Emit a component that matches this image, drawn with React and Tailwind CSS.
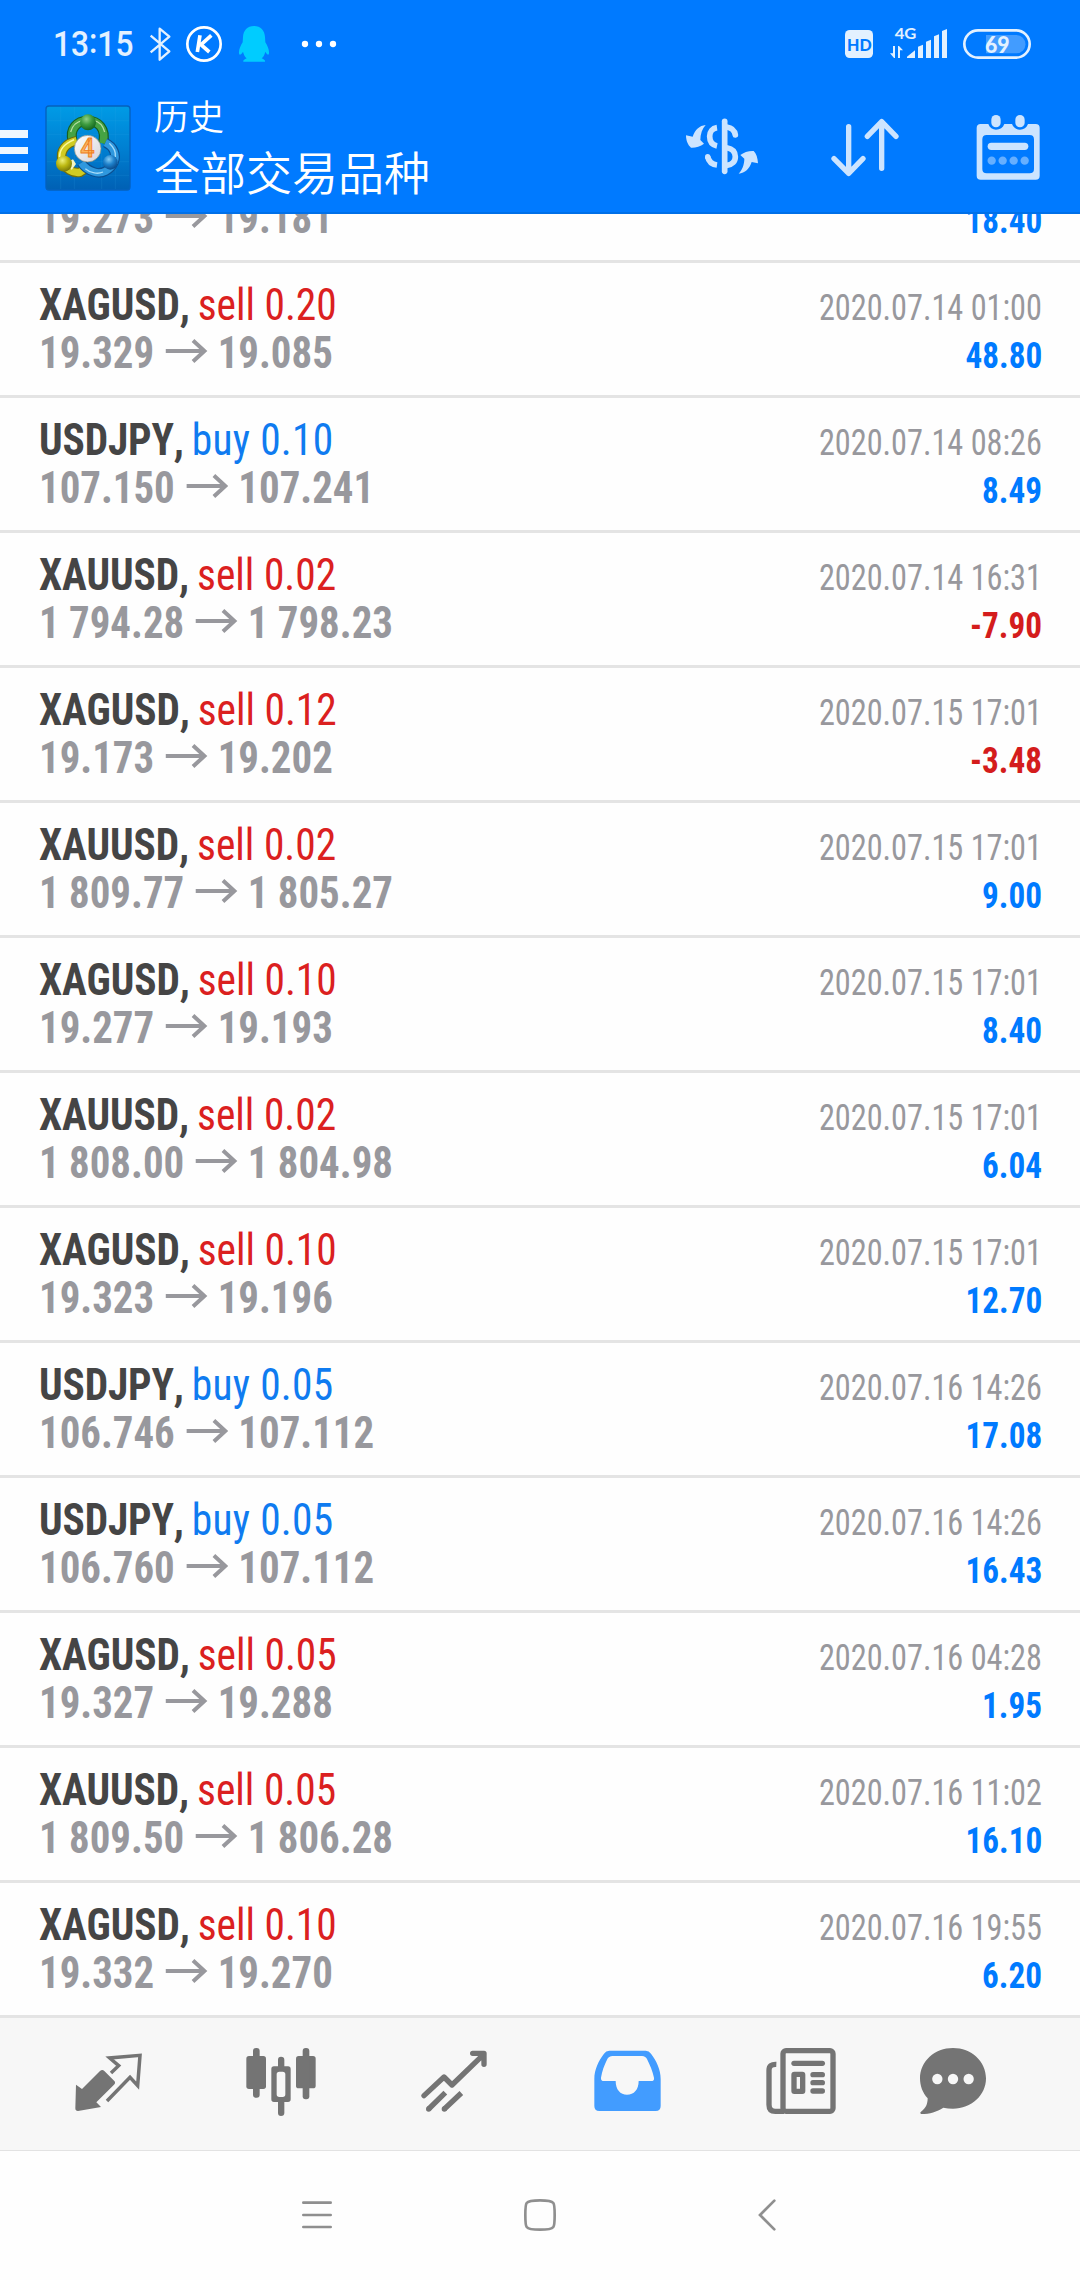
import React from "react";

const trades = [
  ["XAGUSD", "sell", "0.20", "19.329", "19.085", "2020.07.14 01:00", "48.80"],
  ["USDJPY", "buy", "0.10", "107.150", "107.241", "2020.07.14 08:26", "8.49"],
  ["XAUUSD", "sell", "0.02", "1 794.28", "1 798.23", "2020.07.14 16:31", "-7.90"],
  ["XAGUSD", "sell", "0.12", "19.173", "19.202", "2020.07.15 17:01", "-3.48"],
  ["XAUUSD", "sell", "0.02", "1 809.77", "1 805.27", "2020.07.15 17:01", "9.00"],
  ["XAGUSD", "sell", "0.10", "19.277", "19.193", "2020.07.15 17:01", "8.40"],
  ["XAUUSD", "sell", "0.02", "1 808.00", "1 804.98", "2020.07.15 17:01", "6.04"],
  ["XAGUSD", "sell", "0.10", "19.323", "19.196", "2020.07.15 17:01", "12.70"],
  ["USDJPY", "buy", "0.05", "106.746", "107.112", "2020.07.16 14:26", "17.08"],
  ["USDJPY", "buy", "0.05", "106.760", "107.112", "2020.07.16 14:26", "16.43"],
  ["XAGUSD", "sell", "0.05", "19.327", "19.288", "2020.07.16 04:28", "1.95"],
  ["XAUUSD", "sell", "0.05", "1 809.50", "1 806.28", "2020.07.16 11:02", "16.10"],
  ["XAGUSD", "sell", "0.10", "19.332", "19.270", "2020.07.16 19:55", "6.20"],
];

function StatusBar() {
  return (
    <div className="flex h-[88px] shrink-0 text-[#e3f1ff]">
      <div className="ml-[52.5px] w-[96.5px] origin-left scale-x-[0.905] whitespace-nowrap pt-[24px] font-['Roboto'] text-[35px] font-medium leading-[42px]">
        13<span className="relative top-[-3px]">:</span>15
      </div>
      <svg className="h-[88px] w-[23px]" viewBox="447 0 69 264" fill="none" stroke="currentColor" strokeWidth="7">
        <path d="M452 107L508 154L479 179V86L508 110L452 157" strokeLinejoin="round" />
      </svg>
      <svg className="ml-[13px] h-[88px] w-[38px]" viewBox="555 0 114 264" fill="none">
        <circle cx="612" cy="132" r="50" stroke="#fff" strokeWidth="8" />
        <path d="M600 106L592 156M634 106L603 134L628 156" stroke="#fff" strokeWidth="11" />
      </svg>
      <svg className="ml-[15px] h-[88px] w-[32px]" viewBox="714 0 96 264">
        <path
          d="M762 78C742 78 730 92 729 111L728 127C721 138 716 150 717 160C718 168 724 163 729 155C731 164 735 171 740 175C733 178 729 181 730 185H795C796 181 792 178 785 175C790 171 794 164 796 155C801 163 806 168 807 160C808 150 803 138 796 127L795 111C794 92 782 78 762 78Z"
          fill="#00ccff"
        />
      </svg>
      <svg className="ml-[30px] h-[88px] w-[38px]" viewBox="900 0 114 264" fill="#fff">
        <circle cx="915" cy="132" r="9.5" />
        <circle cx="957" cy="132" r="9.5" />
        <circle cx="999" cy="132" r="9.5" />
      </svg>
      <svg className="ml-auto h-[88px] w-[30px]" viewBox="552 0 90 264">
        <rect x="555" y="90" width="84" height="84" rx="14" fill="currentColor" />
        <text x="561" y="152" textLength="74" lengthAdjust="spacingAndGlyphs" fontFamily="Lato" fontWeight="900" fontSize="53" fill="#007aff">
          HD
        </text>
      </svg>
      <svg className="ml-[15px] h-[88px] w-[60px]" viewBox="687 0 180 264" fill="currentColor">
        <text x="704" y="117" textLength="65" lengthAdjust="spacingAndGlyphs" fontFamily="Lato" fontWeight="700" fontSize="48">
          4G
        </text>
        <path d="M699 138H705V174H702L690 160H699ZM714 174V138H717L729 151H720V174Z" />
        <path d="M741 174V170L765 151V174ZM774 174V140L789 134V174ZM798 174V125L813 119V174ZM822 174V109L837 103V174ZM846 174V93L861 87V174Z" />
      </svg>
      <svg className="ml-[13px] mr-[48px] h-[88px] w-[70px]" viewBox="906 0 210 264">
        <path d="M978 105H1069A27 27 0 0 1 1069 160H978Z" fill="#429cff" />
        <rect x="913" y="91" width="196" height="82" rx="41" fill="none" stroke="currentColor" strokeWidth="8" />
        <text x="975" y="158" textLength="74" lengthAdjust="spacingAndGlyphs" fontFamily="Lato" fontWeight="900" fontSize="70" fill="currentColor">
          69
        </text>
      </svg>
    </div>
  );
}

function Logo() {
  return (
    <svg className="ml-[17px] h-[124px] w-[86px]" viewBox="135 264 258 372">
      <defs>
        <linearGradient id="tile" x1="0" y1="0" x2="0" y2="1">
          <stop offset="0" stopColor="#009be6" />
          <stop offset="0.5" stopColor="#0080d2" />
          <stop offset="1" stopColor="#0060b4" />
        </linearGradient>
        <radialGradient id="green" cx="0.4" cy="0.3" r="0.7">
          <stop offset="0" stopColor="#8fd08a" />
          <stop offset="0.5" stopColor="#3d9b3f" />
          <stop offset="1" stopColor="#14661f" />
        </radialGradient>
        <radialGradient id="yellow" cx="0.4" cy="0.3" r="0.7">
          <stop offset="0" stopColor="#eef07a" />
          <stop offset="0.5" stopColor="#bdb912" />
          <stop offset="1" stopColor="#7b7a08" />
        </radialGradient>
        <radialGradient id="blue" cx="0.4" cy="0.3" r="0.7">
          <stop offset="0" stopColor="#84ccf5" />
          <stop offset="0.5" stopColor="#1f82cc" />
          <stop offset="1" stopColor="#0a4b8c" />
        </radialGradient>
        <linearGradient id="disc" x1="0" y1="0" x2="1" y2="1">
          <stop offset="0" stopColor="#ffffff" />
          <stop offset="1" stopColor="#d4d4da" />
        </linearGradient>
      </defs>
      <rect x="138" y="318" width="252" height="252" rx="9" fill="url(#tile)" stroke="#0461bd" strokeWidth="4" />
      <path d="M182 321V567M223 321V567M305 321V567M346 321V567M141 362H387M141 403H387M141 485H387M141 526H387" stroke="#38aee8" strokeOpacity="0.22" strokeWidth="2" />
      <path d="M218 424C207 386 232 362 263 362C294 362 320 386 309 430" fill="none" stroke="#17601f" strokeWidth="30" />
      <path d="M218 424C207 386 232 362 263 362C294 362 320 386 309 430" fill="none" stroke="#45a343" strokeWidth="23" />
      <path d="M212 396C217 376 233 364 248 361M314 396C309 376 295 364 280 361" fill="none" stroke="#b2dda2" strokeWidth="4" />
      <path d="M230 422C196 430 178 453 187 482C197 508 218 520 240 517L256 506" fill="none" stroke="#6f6e0c" strokeWidth="29" />
      <path d="M230 422C196 430 178 453 187 482C197 508 218 520 240 517L256 506" fill="none" stroke="#d0cb22" strokeWidth="22" />
      <path d="M222 419C190 432 178 453 179 471" fill="none" stroke="#fbf99e" strokeWidth="5" />
      <path d="M316 428C341 440 351 464 342 487C331 511 306 524 282 516C266 511 253 502 244 488" fill="none" stroke="#0b4f91" strokeWidth="29" />
      <path d="M316 428C341 440 351 464 342 487C331 511 306 524 282 516C266 511 253 502 244 488" fill="none" stroke="#2f98de" strokeWidth="22" />
      <path d="M328 430C342 443 348 457 346 471M256 506C272 520 294 523 309 516" fill="none" stroke="#a6dcf9" strokeWidth="4" />
      <path d="M219 478L228 492L215 510L202 486Z" fill="#f4f5c3" />
      <circle cx="264" cy="367" r="24" fill="url(#green)" />
      <circle cx="192" cy="491" r="24" fill="url(#yellow)" />
      <circle cx="331" cy="487" r="22" fill="url(#blue)" />
      <circle cx="263" cy="446" r="40" fill="url(#disc)" stroke="#8a8c7a" strokeWidth="2" />
      <text x="241" y="472" textLength="43" lengthAdjust="spacingAndGlyphs" fontFamily="Roboto" fontWeight="600" fontSize="75" fill="#fbb45c" stroke="#ee7d1e" strokeWidth="2.5">
        4
      </text>
    </svg>
  );
}

function Toolbar() {
  return (
    <div className="flex h-[124px] shrink-0">
      <div className="flex w-[28px] flex-col gap-[9px] pt-[42px]">
        <div className="h-[7.5px] bg-[#eff7ff]" />
        <div className="h-[7.5px] bg-[#eff7ff]" />
        <div className="h-[7.5px] bg-[#eff7ff]" />
      </div>
      <Logo />
      <div className="ml-[23px] flex flex-col whitespace-nowrap font-['Noto_Sans_CJK_SC',sans-serif] font-[350] text-white">
        <div className="mt-[6px] text-[35px] leading-[42px]">历史</div>
        <div className="mt-[6px] text-[46px] leading-[56px]">全部交易品种</div>
      </div>
      <svg className="ml-auto h-[124px] w-[80px]" viewBox="66 264 240 372" fill="#cce4ff">
        <path d="M137 375C118 377 105 389 98 410L78 406C78 422 84 436 93 443C105 444 121 439 132 431L121 420C121 402 127 386 137 375Z" />
        <path d="M236 521C255 519 268 507 275 486L294 490C293 474 289 460 281 453C267 452 251 457 241 465L253 476C253 494 246 510 236 521Z" />
        <g fill="none" stroke="#cce4ff">
          <path d="M194 364V514" strokeWidth="17" strokeLinecap="round" />
          <path d="M171 383C157 385 149 395 149 409C149 424 157 435 171 438" strokeWidth="17" />
          <path d="M143 470C146 485 156 493 171 495" strokeWidth="17" />
          <path d="M143 470V471" strokeWidth="16" strokeLinecap="round" />
          <path d="M200 381C215 383 224 392 226 405" strokeWidth="17" strokeLinecap="round" />
          <path d="M200 443C217 446 226 456 226 470C226 484 217 494 200 496" strokeWidth="17" />
        </g>
      </svg>
      <svg className="ml-[66px] h-[124px] w-[74px]" viewBox="504 264 222 372" fill="none" stroke="#cce4ff" strokeWidth="16" strokeLinecap="round" strokeLinejoin="round">
        <path d="M566 380V520M522 476L566 520L609 476M665 505V365M622 409L665 365L708 409" />
      </svg>
      <svg className="ml-[72px] mr-[38px] h-[124px] w-[68px]" viewBox="942 264 204 372">
        <path
          fillRule="evenodd"
          fill="#cce4ff"
          d="M962 372H985C989 383 998 389 1008 389C1020 389 1029 383 1033 372H1056C1060 383 1069 389 1080 389C1091 389 1100 383 1104 372H1127Q1139 372 1139 384V527Q1139 539 1127 539H962Q950 539 950 527V384Q950 372 962 372ZM980 405Q967 405 967 418V507Q967 520 980 520H1109Q1122 520 1122 507V418Q1122 405 1109 405Z"
        />
        <rect x="994" y="345" width="28" height="37" rx="14" fill="#cce4ff" />
        <rect x="1066" y="345" width="28" height="37" rx="14" fill="#cce4ff" />
        <rect x="983" y="428" width="122" height="22" rx="11" fill="#cce4ff" />
        <g fill="#66afff">
          <circle cx="995" cy="482" r="12.5" />
          <circle cx="1028" cy="482" r="12.5" />
          <circle cx="1061" cy="482" r="12.5" />
          <circle cx="1094" cy="482" r="12.5" />
        </g>
      </svg>
    </div>
  );
}

function Prices({ open, close }) {
  return (
    <div className="flex origin-left scale-x-[0.908] font-bold text-[#98989d]">
      <span>{open}</span>
      <svg className="ml-[12px] mr-[11px] h-[48px] w-[47px]" viewBox="0 0 43 48" preserveAspectRatio="none" fill="none" stroke="currentColor" strokeWidth="4">
        <path d="M0.500 22H39M28 11.500L39.500 22L28 32.500" />
      </svg>
      <span>{close}</span>
    </div>
  );
}

function Profit({ value }) {
  return (
    <div className={value.startsWith("-") ? "origin-right scale-x-[0.922] font-bold text-[#d41c1c]" : "origin-right scale-x-[0.922] font-bold text-[#007aff]"}>
      {value}
    </div>
  );
}

/* Row scrolled halfway under the header: only its second line remains in view. */
function ScrolledTrade() {
  return (
    <div className="flex h-[69px] shrink-0 justify-between border-b-[3px] border-[#e4e4e4] pl-[39px] pr-[38px]">
      <div className="flex flex-col whitespace-nowrap text-[45px] leading-[48px]">
        <Prices open="19.273" close="19.181" />
      </div>
      <div className="flex flex-col whitespace-nowrap pt-[3px] text-[36px] leading-[48px]">
        <Profit value="18.40" />
      </div>
    </div>
  );
}

function Trade({ trade }) {
  const [symbol, side, volume, open, close, time, profit] = trade;
  return (
    <div className="flex h-[135px] shrink-0 justify-between border-b-[3px] border-[#e4e4e4] pl-[39px] pr-[38px]">
      <div className="flex flex-col whitespace-nowrap pt-[18px] text-[45px] leading-[48px]">
        <div className="origin-left scale-x-[0.92] [font-kerning:none]">
          <span className="font-bold tracking-[-0.15px] text-[#454545] [word-spacing:-1.5px]">{symbol}, </span>
          <span className={side === "sell" ? "text-[#db2020]" : "tracking-[0.3px] text-[#0f7bf0]"}>
            {side} {volume}
          </span>
        </div>
        <Prices open={open} close={close} />
      </div>
      <div className="flex flex-col items-end whitespace-nowrap pt-[21px] text-[36px] leading-[48px]">
        <div className="origin-right scale-x-[0.896] text-[#98989d]">{time}</div>
        <Profit value={profit} />
      </div>
    </div>
  );
}

function TabBar() {
  return (
    <div className="flex h-[133px] shrink-0 border-b border-[#e2e2e2] bg-[#f7f7f7] pl-[74px] text-[#747474]">
      <svg className="h-[132px] w-[70px]" viewBox="222 84 210 396" fill="currentColor">
        <path d="M228 284L246 297L300 243Q307 237 313 243L343 273Q348 278 342 284L289 337L303 351L234 363Q226 363 226 355Z" />
        <path d="M333 249L356 227L329 204L420 196L413 287L390 262L321 333" fill="none" stroke="currentColor" strokeWidth="10.500" />
      </svg>
      <svg className="ml-[101px] h-[132px] w-[72px]" viewBox="735 84 216 396" fill="currentColor">
        <rect x="739" y="198" width="59" height="99" rx="8" />
        <rect x="759" y="174" width="20" height="149" rx="9" />
        <rect x="888" y="198" width="59" height="97" rx="8" />
        <rect x="908" y="174" width="20" height="154" rx="9" />
        <path d="M834 229V209Q834 200 843 200Q853 200 853 209V229H864Q872 229 872 237V328Q872 336 864 336H853V369Q853 378 843 378Q834 378 834 369V336H822Q814 336 814 328V237Q814 229 822 229ZM838 245Q830 245 830 253V313Q830 321 838 321H848Q856 321 856 313V253Q856 245 848 245Z" fillRule="evenodd" />
      </svg>
      <svg className="ml-[103px] h-[132px] w-[68px]" viewBox="180 84 204 396" fill="none" stroke="currentColor" strokeWidth="16">
        <path d="M192 317L252 261L276 285L371 193M338 190H372V223" strokeLinecap="round" strokeLinejoin="round" />
        <path d="M206 357L256 308M253 357L304 309" />
        <path d="M206 357V357.100M253 357V357.100" strokeLinecap="round" />
      </svg>
      <svg className="ml-[105px] h-[132px] w-[69px]" viewBox="699 84 207 396">
        <path
          fillRule="evenodd"
          fill="#429cff"
          d="M748 182H857Q867 182 873 191C889 212 902 238 902 267V348Q902 363 887 363H718Q703 363 703 348V267C703 238 716 212 732 191Q738 182 748 182ZM758 198Q746 198 741 209C733 225 726 243 723 263Q722 273 732 273H767C767 299 781 314 801 314C822 314 836 299 836 273H873Q884 273 882 263C878 243 870 225 862 209Q857 198 846 198Z"
        />
      </svg>
      <svg className="ml-[103px] h-[132px] w-[72px]" viewBox="135 84 216 396" fill="none" stroke="currentColor">
        <rect x="189" y="182" width="150" height="182" rx="9" strokeWidth="16" />
        <path d="M169 223Q147 222 147 241V344Q147 364 166 364H192" strokeWidth="16" />
        <path d="M222 220H307" strokeWidth="16" strokeLinecap="round" />
        <path d="M279 254H307M279 278H307M279 303H307" strokeWidth="16" strokeLinecap="round" />
        <rect x="222" y="253" width="26" height="51" rx="1" strokeWidth="16" />
      </svg>
      <svg className="ml-[82px] h-[132px] w-[68px]" viewBox="597 84 204 396">
        <path
          fill="currentColor"
          d="M699 174C754 174 798 214 798 265C798 316 754 356 699 356Q684 356 670 353C650 365 630 372 604 372Q598 369 603 365C618 355 623 341 623 325C608 309 600 288 600 265C600 214 644 174 699 174Z"
        />
        <g fill="#f7f7f7">
          <circle cx="652" cy="267" r="15.500" />
          <circle cx="699" cy="267" r="15.500" />
          <circle cx="746" cy="267" r="15.500" />
        </g>
      </svg>
    </div>
  );
}

function SystemNav() {
  return (
    <div className="flex h-[129px] shrink-0 bg-[#fefefe] pl-[301px]">
      <svg className="h-[129px] w-[32px]" viewBox="903 483 96 387" stroke="#8f8f8f" strokeWidth="8" strokeLinecap="round">
        <path d="M910 638H992M910 675H992M910 711H992" />
      </svg>
      <svg className="ml-[190px] h-[129px] w-[34px]" viewBox="489 483 102 387" fill="none" stroke="#8f8f8f" strokeWidth="8">
        <path d="M540 631C570 631 576 634 580 639C584 644 584 655 584 675C584 695 584 706 580 711C576 716 570 719 540 719C510 719 504 716 500 711C496 706 496 695 496 675C496 655 496 644 500 639C504 634 510 631 540 631Z" />
      </svg>
      <svg className="ml-[200px] h-[129px] w-[20px]" viewBox="111 483 60 387" fill="none" stroke="#8f8f8f" strokeWidth="8" strokeLinecap="round">
        <path d="M163 632L120 675L163 718" />
      </svg>
    </div>
  );
}

export default function App() {
  return (
    <div className="flex h-[2280px] w-[1080px] flex-col overflow-hidden bg-[#fefefe]">
      <header className="flex h-[214px] shrink-0 flex-col border-b-2 border-[#0070e8] bg-[#007aff]">
        <StatusBar />
        <Toolbar />
      </header>
      <main className="flex h-[1804px] shrink-0 flex-col justify-end overflow-hidden font-['Roboto_Condensed','Roboto',sans-serif] [font-stretch:75%]">
        <ScrolledTrade />
        {trades.map((trade, i) => (
          <Trade key={i} trade={trade} />
        ))}
      </main>
      <TabBar />
      <SystemNav />
    </div>
  );
}
